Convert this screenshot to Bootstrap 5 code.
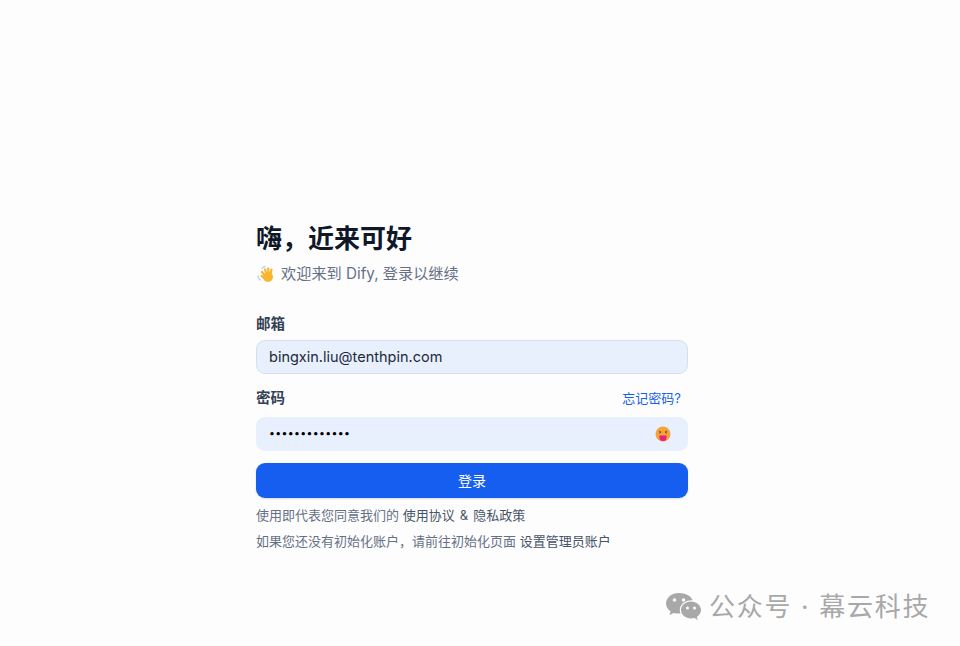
<!DOCTYPE html>
<html lang="zh-CN">

<head>
    <meta charset="UTF-8">
    <meta name="viewport" content="width=device-width, initial-scale=1.0">
    <title>Dify 登录</title>
    <link href="https://cdn.jsdelivr.net/npm/bootstrap@5.3.3/dist/css/bootstrap.min.css" rel="stylesheet">
    <style>
        body {
            background: #fdfdfe;
            font-family: Inter, "Noto Sans CJK SC", sans-serif;
            height: 646px;
            overflow: hidden;
        }

        .login-box {
            width: 432px;
            margin-left: 256px;
            padding-top: 222px;
        }

        .login-title {
            font-size: 26px;
            line-height: 34px;
            font-weight: 700;
            color: #101828;
            margin: 0 0 6px;
        }

        .login-sub {
            font-size: 15.2px;
            line-height: 24px;
            color: #667085;
            margin-bottom: 28px;
            gap: 5px;
        }

        .field-label {
            font-size: 14.5px;
            line-height: 20px;
            font-weight: 600;
            color: #344054;
        }

        .email-label {
            margin-bottom: 6px;
        }

        .pw-label {
            margin-top: 14px;
            margin-bottom: 9px;
        }

        .field-input {
            height: 34px;
            background: #e8f0fe;
            border: 1px solid #d5dff0;
            border-radius: 9px;
            padding: 0 12px;
            font-size: 14.5px;
            color: #1d2939;
        }

        .field-input.no-line {
            border-color: #e8f0fe;
        }

        .pw-dots {
            font-size: 10.5px;
            letter-spacing: 0.35px;
            color: #000;
        }

        .forgot-link {
            font-size: 13px;
            font-weight: 400;
            color: #155eef;
            text-decoration: none;
            padding-right: 7px;
        }

        .btn-login {
            height: 35px;
            margin-top: 12px;
            margin-bottom: 8px;
            background: #155eef;
            border: 0;
            border-radius: 9px;
            color: #fff;
            font-size: 14px;
            box-shadow: 0 1px 2px rgba(16, 24, 40, .15);
        }

        .login-note {
            font-size: 13px;
            line-height: 18px;
            color: #667085;
        }

        .login-note a {
            color: #475467;
            text-decoration: none;
        }

        .terms-link {
            word-spacing: 1.5px;
        }

        .mp-mark {
            position: absolute;
            left: 665px;
            top: 590px;
            gap: 7px;
            font-size: 26px;
            line-height: 34px;
            color: #a8a8a8;
            letter-spacing: 1.7px;
            white-space: nowrap;
        }
    </style>
</head>

<body>
    <div class="login-box">
        <h1 class="login-title">嗨，近来可好</h1>
        <div class="login-sub d-flex align-items-center">
            <svg width="20" height="18" viewBox="0 0 20 18" class="flex-shrink-0">
                <path d="M2 11q.3 2.500 2.500 4M6 3.500Q7 1.800 9 1.500" fill="none" stroke="#b5d3f2" stroke-width="1.300" stroke-linecap="round" />
                <g stroke="#f9b52e" stroke-width="2.200" stroke-linecap="round">
                    <path d="M9 11L6 7M10.500 9L9 4.500M12.500 8.500L12.200 3.500M14.500 9L15.500 4.500M8 13L5.500 11" />
                </g>
                <ellipse cx="12" cy="12" rx="5" ry="5" fill="#f9b52e" />
            </svg>
            <span>欢迎来到 Dify, 登录以继续</span>
        </div>

        <form>
            <div class="field-label email-label">邮箱</div>
            <div class="field-input d-flex align-items-center">bingxin.liu@tenthpin.com</div>

            <div class="d-flex justify-content-between align-items-center field-label pw-label">
                <span>密码</span>
                <a class="forgot-link" href="#">忘记密码?</a>
            </div>
            <div class="field-input no-line pw-dots d-flex align-items-center justify-content-between">
                <span>•••••••••••••</span>
                <svg width="16" height="16" viewBox="0 0 16 16" class="me-1">
                    <circle cx="8" cy="8" r="7.500" fill="#f5a33a" />
                    <path d="M4 5l2 1.200-2 1.200M12 5l-2 1.200 2 1.200" fill="none" stroke="#6b4a2a" stroke-width="1" />
                    <path d="M4.500 9.500h7v2a3.500 3.500 0 0 1-7 0z" fill="#ea1f7d" />
                </svg>
            </div>

            <button type="button" class="btn btn-login w-100 p-0">登录</button>
        </form>

        <div class="login-note mb-2">使用即代表您同意我们的 <a class="terms-link" href="#">使用协议 &amp; 隐私政策</a></div>
        <div class="login-note">如果您还没有初始化账户，请前往初始化页面 <a href="#">设置管理员账户</a></div>
    </div>

    <div class="mp-mark d-flex align-items-center">
        <svg width="37" height="30" viewBox="0 0 37 30" class="flex-shrink-0">
            <path d="M14 1C6.500 1 1 5.800 1 11.500c0 3.300 1.800 6 4.600 8L4.500 23l4.200-2.100c1.600.5 3.300.7 5.300.7.500 0 1 0 1.500-.1C15 20 14.800 19 14.800 18c0-5.500 5.200-9.800 11.800-9.800h1C26 4 20.500 1 14 1z" fill="#a8a8a8" />
            <path d="M36 18c0-4.800-4.600-8.500-10-8.500S16 13.200 16 18s4.600 8.500 10 8.500c1.200 0 2.300-.2 3.400-.5l3.400 2-1-3c2.600-1.800 4.200-4.200 4.200-7z" fill="#a8a8a8" />
            <circle cx="9.500" cy="8" r="1.800" fill="#fdfdfe" />
            <circle cx="18.500" cy="8" r="1.800" fill="#fdfdfe" />
            <circle cx="22.500" cy="16" r="1.500" fill="#fdfdfe" />
            <circle cx="29.500" cy="16" r="1.500" fill="#fdfdfe" />
        </svg>
        <span>公众号 · 幕云科技</span>
    </div>

    <script src="https://cdn.jsdelivr.net/npm/bootstrap@5.3.3/dist/js/bootstrap.bundle.min.js"></script>
</body>

</html>
